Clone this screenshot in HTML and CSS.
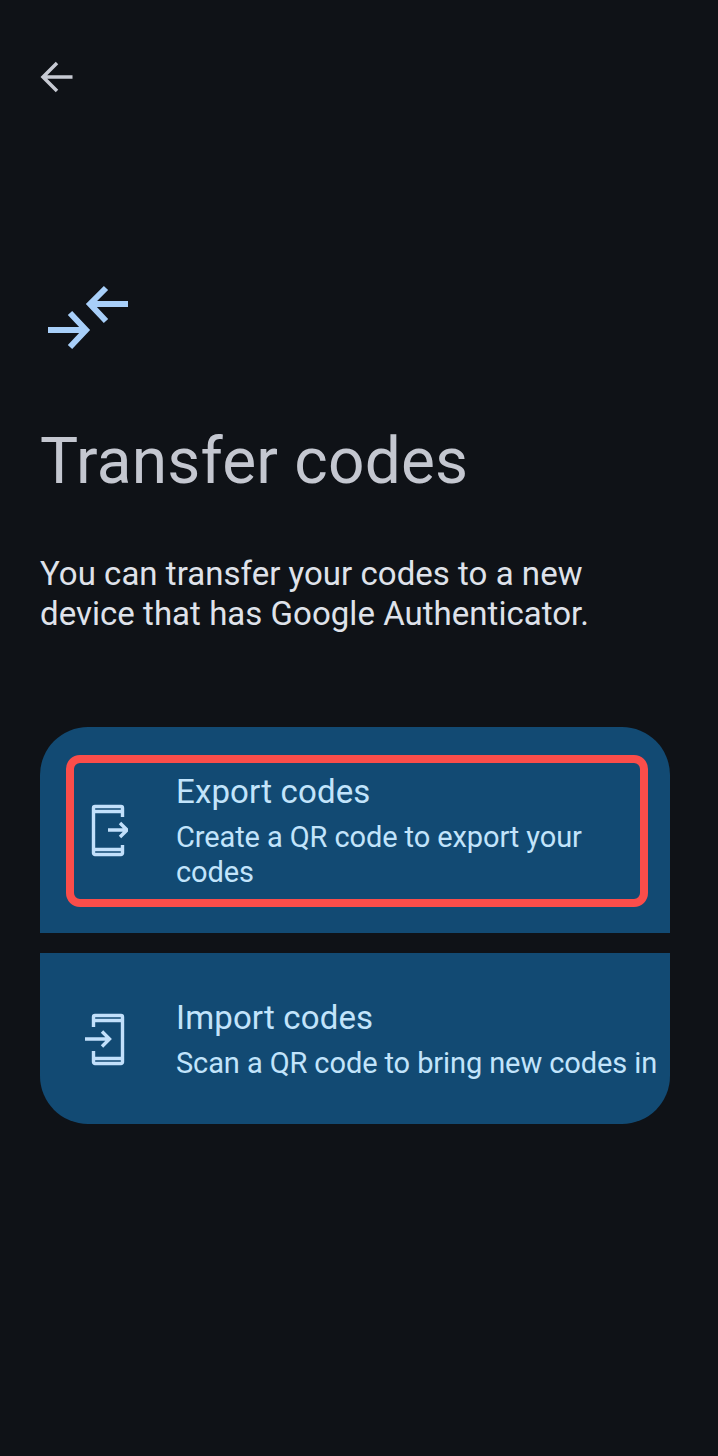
FILE: index.html
```html
<!DOCTYPE html>
<html lang="en">
<head>
  <meta charset="UTF-8">
  <meta name="viewport" content="width=device-width, initial-scale=1.0">
  <title>Transfer codes</title>
  <link rel="stylesheet" href="styles.css">
</head>
<body>
  <header class="top-bar">
    <svg class="back-icon" viewBox="0 0 36 36" aria-label="Back">
      <path d="M32.500 17H2.500M17 3 3 17l14 14" fill="none" stroke="#c7cad3" stroke-width="3.500"/>
    </svg>
  </header>
  <main class="content">
    <svg class="transfer-icon" viewBox="0 0 84 66">
      <path d="M82 20H46M60 4 44 20l16 17M2 46h36M24 29l16 17-16 17" fill="none" stroke="#a8cff9" stroke-width="6"/>
    </svg>
    <h1>Transfer codes</h1>
    <p class="intro">You can transfer your codes to a new device that has Google Authenticator.</p>
    <div class="options">
      <div class="option option-export">
        <svg class="option-icon" viewBox="0 0 44 54">
          <path d="M38.500 14V5a1.500 1.500 0 0 0-1.500-1.500H11A1.500 1.500 0 0 0 9.500 5v45a1.500 1.500 0 0 0 1.500 1.500h26a1.500 1.500 0 0 0 1.500-1.500v-8M9.500 8.500h29M9.500 46.500h29M24 27h18M36 20l7 7-7 7" fill="none" stroke="#c2e0fb" stroke-width="3.400"/>
        </svg>
        <div class="option-text">
          <h2>Export codes</h2>
          <p>Create a QR code to export your codes</p>
        </div>
        <div class="highlight"></div>
      </div>
      <div class="option option-import">
        <svg class="option-icon" viewBox="0 0 44 54">
          <path d="M9.500 15V5A1.500 1.500 0 0 1 11 3.500h26A1.500 1.500 0 0 1 38.500 5v45a1.500 1.500 0 0 1-1.500 1.500H11A1.500 1.500 0 0 1 9.500 50V39M9.500 8.500h29M9.500 46.500h29M1 27h25M18 19.500l7.500 7.500-7.500 7.500" fill="none" stroke="#c2e0fb" stroke-width="3.400"/>
        </svg>
        <div class="option-text">
          <h2>Import codes</h2>
          <p>Scan a QR code to bring new codes in</p>
        </div>
      </div>
    </div>
  </main>
</body>
</html>
```

FILE: styles.css
```css
html, body {
  height: 100%;
}

body {
  margin: 0;
  background-color: #0f1217;
  font-family: 'Roboto', 'Liberation Sans', sans-serif;
  overflow: hidden;
}

.top-bar {
  padding: 60px 40px 0;
  height: 216px;
  box-sizing: border-box;
}

.back-icon {
  display: block;
  width: 36px;
  height: 36px;
}

.content {
  padding: 0 48px 0 40px;
}

.transfer-icon {
  display: block;
  width: 84px;
  height: 66px;
  margin: 68px 0 0 6px;
}

h1 {
  margin: 74px 0 0;
  font-size: 64px;
  line-height: 76px;
  font-weight: 400;
  letter-spacing: 0.2px;
  color: #c4c7d0;
}

.intro {
  margin: 54px 0 0;
  font-size: 33px;
  line-height: 40px;
  letter-spacing: 0.03px;
  color: #dfe2ea;
}

.options {
  display: flex;
  flex-direction: column;
  gap: 20px;
  margin-top: 93px;
}

.option {
  position: relative;
  display: flex;
  align-items: center;
  background-color: #124a73;
  color: #c2e4fb;
  box-sizing: border-box;
}

.option-export {
  height: 206px;
  border-radius: 48px 48px 0 0;
}

.option-import {
  height: 171px;
  border-radius: 0 0 48px 48px;
}

.option-icon {
  width: 44px;
  height: 54px;
  margin-left: 44px;
  flex: none;
}

.option-text {
  margin-left: 48px;
  padding-right: 8px;
}

.option-text h2 {
  margin: 0;
  font-size: 33px;
  line-height: 44px;
  font-weight: 400;
  letter-spacing: 0.15px;
}

.option-text p {
  margin: 6px 0 0;
  font-size: 29px;
  line-height: 35px;
  letter-spacing: -0.1px;
}

.highlight {
  position: absolute;
  left: 26px;
  top: 28px;
  width: 582px;
  height: 152px;
  box-sizing: border-box;
  border: 8px solid #fb4d4a;
  border-radius: 14px;
}
```
